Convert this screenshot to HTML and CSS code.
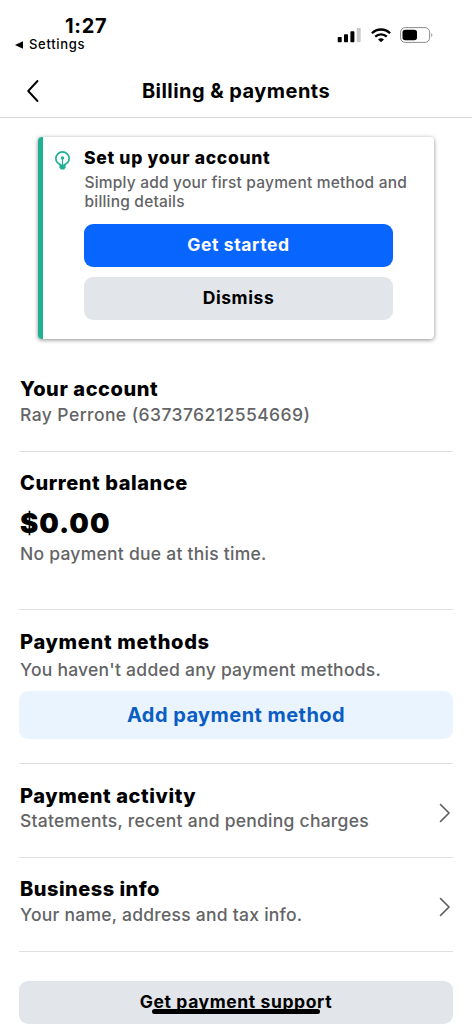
FILE: index.html
```html
<!DOCTYPE html>
<html lang="en">
<head>
<meta charset="utf-8">
<title>Billing &amp; payments</title>
<link rel="stylesheet" href="styles.css">
</head>
<body>
<div class="status">
  <div class="status-left">
    <div class="time">1:27</div>
    <div class="return"><svg width="8" height="8" viewBox="0 0 8 8"><path d="M8 .2V7.800L0 4z"/></svg><span>Settings</span></div>
  </div>
  <div class="status-icons">
    <svg width="24" height="15" viewBox="0 0 24 15"><rect x=".7" y="9" width="4" height="5.200" rx=".7"/><rect x="7" y="6.200" width="4" height="8" rx=".7"/><rect x="13.400" y="3.200" width="4" height="11" rx=".7"/><rect x="19.700" y="0" width="4" height="14.200" rx=".7" fill="#c9c9c9"/></svg>
    <svg class="wifi" width="20" height="15" viewBox="0 0 20 15" fill="none" stroke="#000" stroke-width="2.300"><path d="M.9 5.300C6 .2 14 .2 19.100 5.300"/><path d="M4.200 8.700C7.500 5.500 12.500 5.500 15.800 8.700"/><path d="M7 11.400Q10 8.900 13 11.400L10 14.300z" fill="#000" stroke="none"/></svg>
    <svg class="battery" width="34" height="16" viewBox="0 0 34 16"><rect x=".6" y=".6" width="29" height="14.800" rx="4.600" fill="none" stroke="#8c8c8c" stroke-width="1"/><rect x="2.500" y="2.700" width="14.500" height="10.600" rx="2.800"/><path d="M31.300 5.700Q33.400 8 31.300 10.300z" fill="#8c8c8c"/></svg>
  </div>
</div>
<header class="header">
  <svg class="back" width="14" height="24" viewBox="0 0 14 24" fill="none" stroke="#000" stroke-width="1.900" stroke-linecap="round" stroke-linejoin="round"><path d="M11.500 2L2.200 12l9.300 10"/></svg>
  <h1>Billing &amp; payments</h1>
</header>
<main>
  <section class="card">
    <svg class="bulb" width="15" height="19" viewBox="0 0 15 19" fill="none" stroke="#22b095" stroke-width="1.700"><path d="M5.300 14.600V13.500C2.600 12.400.9 10.300.9 7.500a6.600 6.600 0 0 1 13.200 0c0 2.800-1.700 4.900-4.400 6v1.100"/><path d="M7.500 7v7" stroke-width="1.200"/><circle cx="7.500" cy="6.900" r="1.700" fill="#22b095" stroke="none"/><path d="M4.400 13.600h6.200v2.700l-1.300 2.200H5.700l-1.300-2.200z" fill="#22b095" stroke="none"/></svg>
    <div class="card-body">
      <h2>Set up your account</h2>
      <p>Simply add your first payment method and billing details</p>
      <button class="btn primary">Get started</button>
      <button class="btn neutral">Dismiss</button>
    </div>
  </section>
  <section class="block account">
    <h3>Your account</h3>
    <p>Ray Perrone (637376212554669)</p>
  </section>
  <section class="block balance">
    <h3>Current balance</h3>
    <strong class="amount">$0.00</strong>
    <p>No payment due at this time.</p>
  </section>
  <section class="block methods">
    <h3>Payment methods</h3>
    <p>You haven't added any payment methods.</p>
    <button class="btn add">Add payment method</button>
  </section>
  <section class="block link activity">
    <div>
      <h3>Payment activity</h3>
      <p>Statements, recent and pending charges</p>
    </div>
    <svg class="chevron" width="12" height="20" viewBox="0 0 12 20"><path d="M1.500 1.500L10 10l-8.500 8.500"/></svg>
  </section>
  <section class="block link business">
    <div>
      <h3>Business info</h3>
      <p>Your name, address and tax info.</p>
    </div>
    <svg class="chevron" width="12" height="20" viewBox="0 0 12 20"><path d="M1.500 1.500L10 10l-8.500 8.500"/></svg>
  </section>
  <button class="btn neutral support">Get payment support</button>
</main>
<div class="home-indicator"></div>
</body>
</html>
```
FILE: styles.css
```css
* { box-sizing: border-box; }
body { margin: 0; width: 472px; height: 1024px; overflow: hidden; position: relative; background: #fff; color: #000; font-family: Inter, sans-serif; }
h1, h2, h3, p { margin: 0; }
svg { display: block; flex: none; }

.status { display: flex; justify-content: space-between; height: 64px; }
.status-left { padding: 15px 0 0 15px; }
.time { padding-left: 50px; font-size: 20px; font-weight: 700; line-height: 22px; letter-spacing: .7px; }
.return { display: flex; align-items: center; gap: 6px; font-size: 13px; font-weight: 500; line-height: 15px; letter-spacing: .7px; }
.status-icons { display: flex; align-items: flex-start; padding: 28px 38px 0 0; }
.wifi { margin-left: 10px; }
.battery { margin: -1px 0 0 9px; }

.header { display: flex; align-items: center; justify-content: center; position: relative; height: 54px; border-bottom: 1px solid #dadada; }
.back { position: absolute; left: 26px; top: 15px; }
h1 { font-size: 20px; font-weight: 700; line-height: 24px; letter-spacing: .45px; }

main { padding: 19px 19px 0; }
.card { display: flex; margin: 0 19px; width: 396px; height: 202px; border-left: 5px solid #22b095; border-radius: 4px; padding: 14px 0 0 12px; box-shadow: 0 1px 4px rgba(0,0,0,.45); }
.card-body { width: 350px; padding-left: 14px; margin-top: -4px; }
h2 { font-size: 17.5px; font-weight: 800; line-height: 22px; letter-spacing: .7px; }
.card p { font-size: 15.5px; line-height: 19px; letter-spacing: .2px; margin: 4px 0 13px; padding-left: .5px; }
p { color: #636466; font-size: 17.5px; font-weight: 500; line-height: 24px; letter-spacing: .25px; }

.btn { display: block; border: 0; padding: 0 0 2px; width: 100%; height: 43px; border-radius: 9px; font-family: inherit; font-size: 17.5px; font-weight: 700; letter-spacing: .6px; color: #000; }
.card .btn { width: 309px; }
.primary { background: #0866ff; color: #fff; }
.neutral { background: #e2e5ea; }
.primary + .neutral { margin-top: 10px; }

.block { border-bottom: 1px solid #dfe0e2; }
.block h3 { font-size: 20px; font-weight: 800; line-height: 24px; letter-spacing: .57px; padding-left: 1px; }
.block p { padding-left: 1px; }
.account { height: 75px; margin-top: 38px; }
.account p { letter-spacing: .43px; margin-top: 2px; }
.balance { height: 158px; padding-top: 19px; }
.amount { display: block; font-size: 27.5px; font-weight: 900; line-height: 32px; letter-spacing: 1px; margin-top: 12px; padding-left: 1px; }
.balance p { margin-top: 3px; }
.methods { height: 154px; padding-top: 20px; }
.methods h3 { letter-spacing: .7px; }
.methods p { margin-top: 4px; }
.add { height: 48px; margin-top: 9px; padding-bottom: 0; background: #eaf4ff; color: #0a5dc2; font-size: 20px; letter-spacing: .45px; }
.link { display: flex; justify-content: space-between; height: 94px; padding: 19px 2px 0 0; }
.link p { margin-top: 2px; }
.activity h3 { margin: 1px 0 -1px; }
.business h3 { letter-spacing: .48px; }
.chevron { margin-top: 20px; fill: none; stroke: #5b5c5e; stroke-width: 1.600; stroke-linecap: round; stroke-linejoin: round; }
.support { margin-top: 29px; }

.home-indicator { position: absolute; left: 152px; bottom: 10px; width: 168px; height: 5px; border-radius: 3px; background: #000; }
```
